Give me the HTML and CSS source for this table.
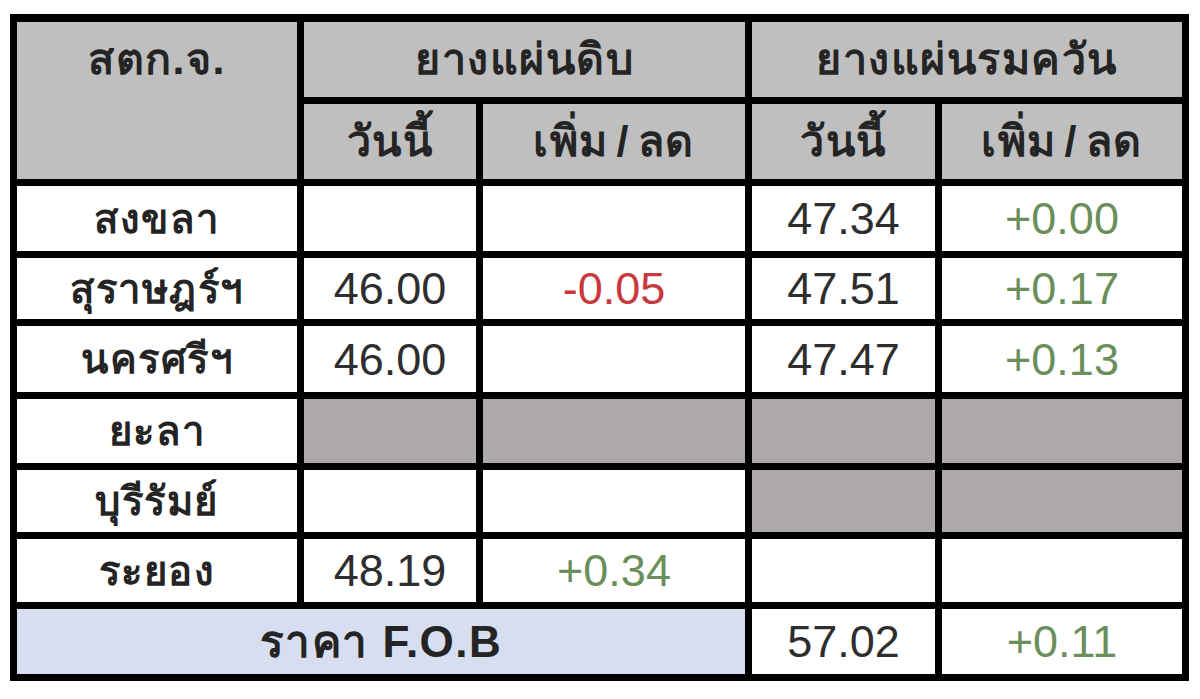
FILE: index.html
```html
<!DOCTYPE html>
<html lang="th">
<head>
<meta charset="utf-8">
<title>ราคายาง</title>
<link rel="stylesheet" href="styles.css">
</head>
<body>
<div class="sheet">
  <div class="cell head corner">สตก.จ.</div>
  <div class="cell head span2">ยางแผ่นดิบ</div>
  <div class="cell head span2">ยางแผ่นรมควัน</div>
  <div class="cell head">วันนี้</div>
  <div class="cell head">เพิ่ม<span class="slash">/</span>ลด</div>
  <div class="cell head">วันนี้</div>
  <div class="cell head">เพิ่ม<span class="slash">/</span>ลด</div>

  <div class="cell label">สงขลา</div>
  <div class="cell"></div>
  <div class="cell"></div>
  <div class="cell num">47.34</div>
  <div class="cell num up">+0.00</div>

  <div class="cell label">สุราษฎร์ฯ</div>
  <div class="cell num">46.00</div>
  <div class="cell num down">-0.05</div>
  <div class="cell num">47.51</div>
  <div class="cell num up">+0.17</div>

  <div class="cell label">นครศรีฯ</div>
  <div class="cell num">46.00</div>
  <div class="cell"></div>
  <div class="cell num">47.47</div>
  <div class="cell num up">+0.13</div>

  <div class="cell label">ยะลา</div>
  <div class="cell blank"></div>
  <div class="cell blank"></div>
  <div class="cell blank"></div>
  <div class="cell blank"></div>

  <div class="cell label">บุรีรัมย์</div>
  <div class="cell"></div>
  <div class="cell"></div>
  <div class="cell blank"></div>
  <div class="cell blank"></div>

  <div class="cell label">ระยอง</div>
  <div class="cell num">48.19</div>
  <div class="cell num up">+0.34</div>
  <div class="cell"></div>
  <div class="cell"></div>

  <div class="cell label fob">ราคา F.O.B</div>
  <div class="cell num">57.02</div>
  <div class="cell num up">+0.11</div>
</div>
</body>
</html>
```
FILE: styles.css
```css
html, body {
  margin: 0;
  padding: 0;
  background: #ffffff;
}

body {
  padding: 14px 0 0 10px;
  font-family: "Liberation Sans", "DejaVu Sans", sans-serif;
}

.sheet {
  display: grid;
  grid-template-columns: 280px 172px 262px 183px 240px;
  grid-template-rows: 75px 75px 65px 61px 66px 64px 62px 63px 65px;
  gap: 7px;
  padding: 8px 7px 7px 7px;
  background: #000000;
  width: max-content;
}

.cell {
  background: #ffffff;
  display: flex;
  align-items: center;
  justify-content: center;
  color: #2e2e2e;
  font-size: 45px;
  line-height: 1;
}

.head {
  background: #bfbfbf;
  font-weight: bold;
  font-size: 43px;
  letter-spacing: 1.5px;
  color: #242424;
}

.slash {
  margin: 0 8px;
}

.corner {
  grid-row: span 2;
  align-items: flex-start;
  padding-top: 16px;
}

.span2 {
  grid-column: span 2;
}

.label {
  font-weight: bold;
  font-size: 40px;
  letter-spacing: 1.5px;
  color: #242424;
}

.num {
  font-size: 45px;
}

.up {
  color: #6b8f5a;
}

.down {
  color: #c8393e;
}

.blank {
  background: #aca9a8;
}

.fob {
  grid-column: span 3;
  background: #d7deef;
  font-size: 44px;
  letter-spacing: 1.5px;
}
```
